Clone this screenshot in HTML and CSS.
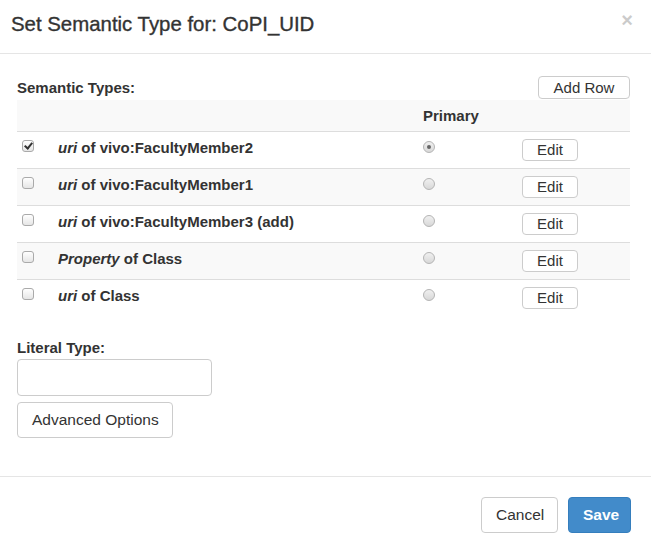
FILE: index.html
```html
<!DOCTYPE html>
<html>
<head>
<meta charset="utf-8">
<link rel="stylesheet" href="styles.css">
</head>
<body>
<div class="modal">
  <div class="modal-header">
    <h4 class="title">Set Semantic Type for: CoPI_UID</h4>
    <span class="close">×</span>
  </div>
  <div class="modal-body">
    <div class="st-head">
      <span class="label">Semantic Types:</span>
      <button class="btn btn-sm">Add Row</button>
    </div>
    <table class="types">
      <colgroup><col class="w1"><col class="w2"><col class="w3"><col class="w4"></colgroup>
      <thead>
        <tr><th></th><th></th><th>Primary</th><th></th></tr>
      </thead>
      <tbody>
        <tr><td class="c1"><span class="cb checked"></span></td><td class="c2"><i>uri</i> of vivo:FacultyMember2</td><td class="c3"><span class="rd checked"></span></td><td class="c4"><button class="btn btn-edit">Edit</button></td></tr>
        <tr><td class="c1"><span class="cb"></span></td><td class="c2"><i>uri</i> of vivo:FacultyMember1</td><td class="c3"><span class="rd"></span></td><td class="c4"><button class="btn btn-edit">Edit</button></td></tr>
        <tr><td class="c1"><span class="cb"></span></td><td class="c2"><i>uri</i> of vivo:FacultyMember3 (add)</td><td class="c3"><span class="rd"></span></td><td class="c4"><button class="btn btn-edit">Edit</button></td></tr>
        <tr><td class="c1"><span class="cb"></span></td><td class="c2"><i>Property</i> of Class</td><td class="c3"><span class="rd"></span></td><td class="c4"><button class="btn btn-edit">Edit</button></td></tr>
        <tr><td class="c1"><span class="cb"></span></td><td class="c2"><i>uri</i> of Class</td><td class="c3"><span class="rd"></span></td><td class="c4"><button class="btn btn-edit">Edit</button></td></tr>
      </tbody>
    </table>
    <div class="literal">
      <span class="label">Literal Type:</span>
      <input class="input" type="text">
      <button class="btn btn-lg">Advanced Options</button>
    </div>
  </div>
  <div class="modal-footer">
    <button class="btn btn-lg">Cancel</button>
    <button class="btn btn-lg btn-primary">Save</button>
  </div>
</div>
</body>
</html>
```
FILE: styles.css
```css
html, body {
  margin: 0;
  padding: 0;
  background: #fff;
}
body {
  font-family: "Liberation Sans", Arial, sans-serif;
  font-size: 15px;
  color: #333;
}
.modal {
  width: 651px;
}
.modal-header {
  height: 54px;
  border-bottom: 1px solid #e5e5e5;
  display: flex;
  align-items: flex-start;
  justify-content: space-between;
  padding: 0 18px 0 11px;
  box-sizing: border-box;
}
.title {
  margin: 11px 0 0 0;
  font-size: 20.4px;
  font-weight: normal;
  line-height: 26px;
  color: #333;
  -webkit-text-stroke: 0.35px #333;
}
.close {
  margin-top: 8px;
  font-size: 20px;
  font-weight: bold;
  color: #000;
  opacity: 0.2;
  line-height: 24px;
}
.modal-body {
  padding: 22px 21px 0 17px;
  height: 422px;
  box-sizing: border-box;
}
.st-head {
  display: flex;
  justify-content: space-between;
  align-items: flex-end;
  height: 24px;
}
.label {
  font-weight: bold;
  line-height: 20px;
}
.st-head .label {
  margin-bottom: 2px;
}
.btn {
  font-family: "Liberation Sans", Arial, sans-serif;
  background: #fff;
  border: 1px solid #ccc;
  border-radius: 4px;
  color: #333;
  padding: 0;
  box-sizing: border-box;
  white-space: nowrap;
}
.btn-sm {
  width: 92px;
  height: 23px;
  font-size: 15px;
  line-height: 20px;
  margin-bottom: 1px;
}
.btn-edit {
  display: block;
  width: 56px;
  height: 22px;
  font-size: 15px;
  line-height: 20px;
}
.btn-lg {
  height: 36px;
  font-size: 15.5px;
  padding: 0 14px;
}
.btn-primary {
  background: #428bca;
  border-color: #357ebd;
  color: #fff;
  font-weight: bold;
}
.types {
  width: 613px;
  border-collapse: collapse;
  table-layout: fixed;
}
.w1 { width: 33px; }
.w2 { width: 365px; }
.w3 { width: 99px; }
.w4 { width: 116px; }
.types th {
  height: 31px;
  padding: 0 8px;
  text-align: left;
  font-weight: bold;
  vertical-align: middle;
  border-bottom: 1px solid #ddd;
  background: #f9f9f9;
}
.types td {
  box-sizing: border-box;
  height: 37px;
  padding: 6px 8px 0 8px;
  border-bottom: 1px solid #ddd;
  font-weight: bold;
  vertical-align: top;
  line-height: 20px;
  white-space: nowrap;
}
.types tbody tr:nth-child(even) td {
  background: #f9f9f9;
}
.types tbody tr:last-child td {
  border-bottom: none;
}
.types td.c1 {
  padding: 8px 0 0 5px;
}
.types td.c3 {
  padding-top: 9px;
}
.types td.c4 {
  padding-top: 7px;
}
.cb {
  display: block;
  width: 10px;
  height: 10px;
  border: 1px solid #aaa;
  border-radius: 3px;
  background: linear-gradient(#fff, #e6e6e6);
  position: relative;
}
.cb.checked::after {
  content: "";
  position: absolute;
  left: 3px;
  top: 0px;
  width: 3px;
  height: 6px;
  border: solid #333;
  border-width: 0 2px 2px 0;
  transform: rotate(40deg);
}
.rd {
  display: block;
  width: 10px;
  height: 10px;
  border: 1px solid #b5b5b5;
  border-radius: 50%;
  background: linear-gradient(#f0f0f0, #d8d8d8);
  position: relative;
}
.rd.checked::after {
  content: "";
  position: absolute;
  left: 3px;
  top: 3px;
  width: 4px;
  height: 4px;
  border-radius: 50%;
  background: #666;
}
.literal {
  display: flex;
  flex-direction: column;
  align-items: flex-start;
  margin-top: 21px;
}
.literal .label {
  margin-bottom: 1px;
}
.input {
  width: 195px;
  height: 37px;
  border: 1px solid #ccc;
  border-radius: 4px;
  box-sizing: border-box;
  margin: 0 0 6px 0;
}
.literal .btn-lg {
  width: 156px;
  height: 36px;
}
.modal-footer {
  border-top: 1px solid #e5e5e5;
  display: flex;
  justify-content: flex-end;
  gap: 10px;
  padding: 20px 20px 0 0;
}
.modal-footer .btn-lg:first-child {
  width: 77px;
}
.modal-footer .btn-primary {
  width: 63px;
}
```
